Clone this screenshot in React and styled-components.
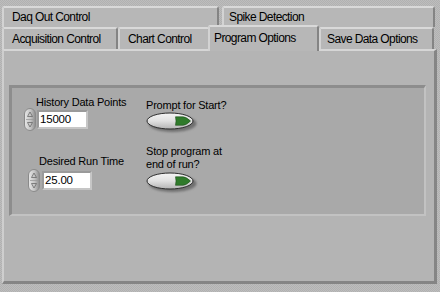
import React from 'react';
import styled, { createGlobalStyle } from 'styled-components';

const GlobalStyle = createGlobalStyle`
  html, body {
    margin: 0;
    padding: 0;
  }
  body {
    width: 440px;
    height: 292px;
    overflow: hidden;
    background: repeating-conic-gradient(#bdbdbd 0 25%, #b1b1b1 0 50%) 0 0 / 2px 2px;
    font-family: "Liberation Sans", Arial, sans-serif;
    font-size: 11px;
    letter-spacing: -0.2px;
    line-height: 13px;
    color: #000;
  }
`;

const Frame = styled.div`
  padding: 6px 0 0 2px;
`;

const TabRow = styled.div`
  display: flex;
  align-items: flex-end;
  height: ${p => p.h}px;
`;

const Tab = styled.div`
  box-sizing: border-box;
  position: relative;
  z-index: ${p => (p.active ? 2 : 1)};
  width: ${p => p.w}px;
  height: ${p => (p.active ? 26 : p.h || 22)}px;
  margin-left: ${p => p.ml || 0}px;
  margin-bottom: ${p => (p.active ? -2 : 0)}px;
  padding-left: ${p => p.pad}px;
  padding-bottom: ${p => (p.active ? 2 : 0)}px;
  display: flex;
  align-items: center;
  background: #b7b7b7;
  border-top: 2px solid #d9d9d9;
  border-left: 2px solid #d3d3d3;
  border-right: 2px solid #848484;
  border-top-left-radius: 2px;
  border-top-right-radius: 3px;
  white-space: nowrap;
  font-size: 12px;
  letter-spacing: -0.6px;
`;

const Panel = styled.div`
  box-sizing: border-box;
  width: 435px;
  height: 235px;
  background: #b4b4b4;
  border-top: 2px solid #d6d6d6;
  border-left: 2px solid #cecece;
  border-right: 3px solid #858585;
  border-bottom: 3px solid #858585;
  padding: 34px 0 0 5px;
`;

const Decoration = styled.div`
  box-sizing: border-box;
  width: 417px;
  height: 131px;
  background: #a9a9a9;
  border-top: 3px solid #8d8d8d;
  border-left: 3px solid #8d8d8d;
  border-right: 2px solid #c2c2c2;
  border-bottom: 2px solid #c2c2c2;
  display: flex;
  padding-left: 12px;
`;

const Column = styled.div`
  display: flex;
  flex-direction: column;
  align-items: flex-start;
  width: ${p => p.w}px;
  padding-top: ${p => p.top}px;
`;

const Label = styled.div`
  margin-left: ${p => p.ml || 0}px;
  margin-top: ${p => p.mt || 0}px;
  white-space: nowrap;
`;

const NumRow = styled.div`
  display: flex;
  align-items: flex-start;
  gap: ${p => p.gap}px;
  margin-left: ${p => p.ml || 0}px;
  margin-top: ${p => p.mt || 0}px;
`;

const NumBox = styled.div`
  box-sizing: border-box;
  width: ${p => p.w}px;
  height: 19px;
  margin-top: 2px;
  background: #fff;
  border: 2px solid #c6c6c6;
  border-top-color: #9a9a9a;
  border-left-color: #9a9a9a;
  padding-left: 1px;
  display: flex;
  align-items: center;
  font-size: 11.5px;
  letter-spacing: -0.2px;
`;

const BoolWrap = styled.div`
  margin-top: ${p => p.mt || 0}px;
  line-height: 0;
`;

const Spinner = () => (
  <svg width="12" height="23" viewBox="0 0 12 23">
    <defs>
      <linearGradient id="spg" x1="0" x2="1" y1="0" y2="0">
        <stop offset="0" stopColor="#e8e8e8" />
        <stop offset="0.55" stopColor="#c4c4c4" />
        <stop offset="1" stopColor="#8c8c8c" />
      </linearGradient>
    </defs>
    <rect x="0.5" y="0.5" width="11" height="22" rx="5.5" fill="url(#spg)" stroke="#8a8a8a" />
    <path d="M6 4 L8.5 8.5 L3.5 8.5 Z" fill="none" stroke="#6a6a6a" strokeWidth="0.8" />
    <line x1="2" y1="11.5" x2="10" y2="11.5" stroke="#9a9a9a" strokeWidth="0.8" />
    <path d="M6 19 L8.5 14.5 L3.5 14.5 Z" fill="none" stroke="#6a6a6a" strokeWidth="0.8" />
  </svg>
);

const BoolButton = () => (
  <svg width="54" height="22" viewBox="0 0 54 22">
    <defs>
      <linearGradient id="btg" x1="0" x2="0" y1="0" y2="1">
        <stop offset="0" stopColor="#f4f4f4" />
        <stop offset="0.5" stopColor="#e0e0e0" />
        <stop offset="1" stopColor="#b4b4b4" />
      </linearGradient>
      <filter id="bsh" x="-20%" y="-40%" width="140%" height="180%">
        <feGaussianBlur stdDeviation="1.2" />
      </filter>
    </defs>
    <ellipse cx="26.5" cy="11.5" rx="24" ry="8.5" fill="#5e5e5e" opacity="0.75" filter="url(#bsh)" />
    <ellipse cx="24" cy="9" rx="23" ry="8" fill="url(#btg)" stroke="#2c2c2c" strokeWidth="1" />
    <path d="M29.5 4.8 L37 4.8 Q40 4.8 44.5 9 Q40 13.3 37 13.3 L29.5 13.3 Q30.5 9 29.5 4.8 Z" fill="#2f7a2a" stroke="#1f4f1c" strokeWidth="0.6" />
  </svg>
);

const NumericControl = ({ label, value, labelMl, labelMt, rowMl, rowMt, gap, boxW }) => (
  <>
    <Label ml={labelMl} mt={labelMt}>{label}</Label>
    <NumRow ml={rowMl} mt={rowMt} gap={gap}>
      <Spinner />
      <NumBox w={boxW}>{value}</NumBox>
    </NumRow>
  </>
);

export default function App() {
  return (
    <>
      <GlobalStyle />
      <Frame>
        <TabRow h={21}>
          <Tab w={217} pad={8} h={21}>Daq Out Control</Tab>
          <Tab w={213} ml={3} pad={5} h={21}>Spike Detection</Tab>
        </TabRow>
        <TabRow h={22}>
          <Tab w={116} pad={8}>Acquisition Control</Tab>
          <Tab w={92} pad={8}>Chart Control</Tab>
          <Tab w={111} ml={-2} pad={4} active>Program Options</Tab>
          <Tab w={115} pad={6}>Save Data Options</Tab>
        </TabRow>
        <Panel>
          <Decoration>
            <Column w={122} top={8}>
              <NumericControl
                label="History Data Points"
                value="15000"
                labelMl={12}
                rowMt={-1}
                gap={1}
                boxW={51}
              />
              <NumericControl
                label="Desired Run Time"
                value="25.00"
                labelMl={15}
                labelMt={24}
                rowMl={4}
                rowMt={1}
                gap={2}
                boxW={50}
              />
            </Column>
            <Column w={120} top={11}>
              <Label>Prompt for Start?</Label>
              <BoolWrap>
                <BoolButton />
              </BoolWrap>
              <Label mt={11}>
                Stop program at
                <br />
                end of run?
              </Label>
              <BoolWrap mt={1}>
                <BoolButton />
              </BoolWrap>
            </Column>
          </Decoration>
        </Panel>
      </Frame>
    </>
  );
}
